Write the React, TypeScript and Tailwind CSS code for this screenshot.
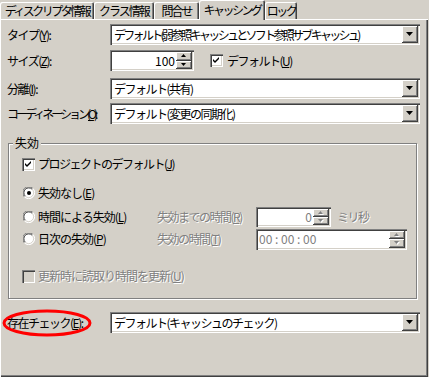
import React from "react";

const sunken =
  "shadow-[inset_1px_1px_0_#808080,inset_2px_2px_0_#404040,inset_-1px_-1px_0_#ffffff,inset_-2px_-2px_0_#d4d0c8]";
const raised =
  "shadow-[inset_-1px_-1px_0_#404040,inset_1px_1px_0_#ffffff,inset_-2px_-2px_0_#808080,inset_2px_2px_0_#d4d0c8]";

function Arrow({ disabled = false, small = false, up = false }: { disabled?: boolean; small?: boolean; up?: boolean }) {
  const w = small ? 5 : 7;
  const h = small ? 3 : 4;
  const pts = up ? `0,${h} ${w},${h} ${w / 2},0` : `0,0 ${w},0 ${w / 2},${h}`;
  return (
    <svg width={w + 1} height={h + 1} viewBox={`0 0 ${w + 1} ${h + 1}`}>
      {disabled && <polygon points={pts} fill="#ffffff" transform="translate(1,1)" />}
      <polygon points={pts} fill={disabled ? "#808080" : "#000000"} />
    </svg>
  );
}

function Combo({ text, tracking = "tracking-[-1.5px]" }: { text: string; tracking?: string }) {
  return (
    <div className={`flex h-[21px] w-[310px] bg-white p-[2px] ${sunken}`}>
      <div className={`flex flex-1 items-center pl-[2px] whitespace-nowrap overflow-hidden ${tracking}`}>{text}</div>
      <div className={`flex w-[16px] items-center justify-center bg-[#d4d0c8] ${raised}`}>
        <Arrow />
      </div>
    </div>
  );
}

function SpinButtons({ disabled = false }: { disabled?: boolean }) {
  return (
    <div className="flex w-[16px] flex-col">
      <div className={`flex flex-1 items-center justify-center bg-[#d4d0c8] ${raised}`}>
        <Arrow small up disabled={disabled} />
      </div>
      <div className={`flex flex-1 items-center justify-center bg-[#d4d0c8] ${raised}`}>
        <Arrow small disabled={disabled} />
      </div>
    </div>
  );
}

function Checkbox({ checked = false, disabled = false }: { checked?: boolean; disabled?: boolean }) {
  return (
    <div className={`relative h-[13px] w-[13px] shrink-0 ${disabled ? "bg-[#d4d0c8]" : "bg-white"} ${sunken}`}>
      {checked && (
        <svg className="absolute left-0 top-0" width="13" height="13" viewBox="0 0 13 13">
          <path d="M3 5 L5 7 L9 3 L9 5 L5 9 L3 7 Z" fill="#000" />
        </svg>
      )}
    </div>
  );
}

function Radio({ checked = false }: { checked?: boolean }) {
  return (
    <svg width="12" height="12" viewBox="0 0 12 12" className="shrink-0">
      <circle cx="6" cy="6" r="5.5" fill="#ffffff" />
      <path d="M1.4 9.9 A5.5 5.5 0 0 1 9.9 1.4" stroke="#808080" strokeWidth="1" fill="none" />
      <path d="M2.3 9.2 A4.5 4.5 0 0 1 9.2 2.3" stroke="#404040" strokeWidth="1" fill="none" />
      <path d="M9.9 1.4 A5.5 5.5 0 0 1 1.4 9.9" stroke="#ffffff" strokeWidth="1" fill="none" />
      <path d="M9.2 2.3 A4.5 4.5 0 0 1 2.3 9.2" stroke="#d4d0c8" strokeWidth="1" fill="none" />
      {checked && <circle cx="6" cy="6" r="2" fill="#000" />}
    </svg>
  );
}

function U({ c }: { c: string }) {
  return <span className="underline underline-offset-[1px]">{c}</span>;
}

const disabledText = "text-[#808080] [text-shadow:1px_1px_0_#ffffff]";

function Tab({ w, label, active = false, tr = "tracking-[-2px]" }: { w: string; label: string; active?: boolean; tr?: string }) {
  return (
    <div
      className={`flex items-center justify-center whitespace-nowrap rounded-t-[2px] bg-[#d4d0c8] ${w} ${tr} ${
        active
          ? "relative z-10 -mb-px h-[20px] shadow-[inset_1px_1px_0_#ffffff,inset_-1px_0_0_#404040,inset_-2px_0_0_#808080]"
          : "h-[17px] shadow-[inset_1px_1px_0_#ffffff,inset_-1px_0_0_#404040,inset_-2px_0_0_#808080]"
      }`}
    >
      {label}
    </div>
  );
}

export default function App() {
  return (
    <div className="relative h-[377px] w-[429px] overflow-hidden bg-[#d4d0c8] font-['Noto_Sans_CJK_JP',sans-serif] text-[12px] leading-[14px] text-black">
      {/* tabs */}
      <div className="flex h-[19px] items-end">
        <Tab w="w-[94px]" label="ディスクリプタ情報" tr="tracking-[-2.5px]" />
        <Tab w="w-[60px]" label="クラス情報" />
        <Tab w="w-[45px]" label="問合せ" />
        <Tab w="w-[66px]" label="キャッシング" active tr="tracking-[-2.5px]" />
        <Tab w="w-[32px]" label="ロック" tr="tracking-[-2.5px]" />
      </div>

      {/* panel */}
      <div className="h-[358px] w-[428px] pl-[7px] pt-[5px] shadow-[inset_1px_1px_0_#ffffff,inset_-1px_-1px_0_#404040,inset_-2px_-2px_0_#808080]">
        <div className="flex h-[21px] items-center">
          <div className="w-[103px] tracking-[-1.5px]">
            タイプ(<U c="Y" />):
          </div>
          <Combo text="デフォルト(弱参照キャッシュとソフト参照サブキャッシュ)" tracking="tracking-[-2.7px]" />
        </div>

        <div className="mt-[5px] flex h-[21px] items-center">
          <div className="w-[103px] tracking-[-1.5px]">
            サイズ(<U c="Z" />):
          </div>
          <div className={`flex h-[21px] w-[84px] bg-white p-[2px] ${sunken}`}>
            <div className="flex flex-1 items-center justify-end pr-[1px]">100</div>
            <SpinButtons />
          </div>
          <div className="ml-[16px] flex items-center gap-[4px]">
            <Checkbox checked />
            <span className="tracking-[-1.5px]">
              デフォルト(<U c="U" />)
            </span>
          </div>
        </div>

        <div className="mt-[7px] flex h-[21px] items-center">
          <div className="w-[103px] tracking-[-1.5px]">
            分離(<U c="I" />):
          </div>
          <Combo text="デフォルト(共有)" />
        </div>

        <div className="mt-[4px] flex h-[21px] items-center">
          <div className="w-[103px] whitespace-nowrap tracking-[-3px]">
            コーディネーション(<U c="O" />):
          </div>
          <Combo text="デフォルト(変更の同期化)" />
        </div>

        <fieldset className="ml-[1px] mt-[12px] w-[409px] border border-[#808080] p-0 shadow-[inset_1px_1px_0_#ffffff,1px_1px_0_#ffffff]">
          <legend className="ml-[4px] bg-[#d4d0c8] px-[2px] leading-[14px]">失効</legend>
          <div className="flex flex-col pb-[14px] pl-[13px]">
            <div className="mt-[6px] flex h-[16px] items-center gap-[3px]">
              <Checkbox checked />
              <span className="tracking-[-1.5px]">
                プロジェクトのデフォルト(<U c="J" />)
              </span>
            </div>
            <div className="mt-[13px] flex h-[16px] items-center gap-[3px] pl-[1px]">
              <Radio checked />
              <span className="tracking-[-1px]">
                失効なし(<U c="E" />)
              </span>
            </div>
            <div className="mt-[6px] flex h-[20px] items-center">
              <div className="flex w-[135px] items-center gap-[3px] pl-[1px]">
                <Radio />
                <span className="tracking-[-1px]">
                  時間による失効(<U c="L" />)
                </span>
              </div>
              <div className={`w-[99px] tracking-[-1.5px] ${disabledText}`}>
                失効までの時間(<U c="R" />)
              </div>
              <div className={`flex h-[20px] w-[75px] bg-white p-[2px] ${sunken}`}>
                <div className="flex flex-1 items-center justify-end pr-[1px] text-[#808080]">0</div>
                <SpinButtons disabled />
              </div>
              <span className={`ml-[6px] tracking-[-1.5px] ${disabledText}`}>ミリ秒</span>
            </div>
            <div className="mt-[2px] flex h-[20px] items-center">
              <div className="flex w-[135px] items-center gap-[3px] pl-[1px]">
                <Radio />
                <span className="tracking-[-1px]">
                  日次の失効(<U c="P" />)
                </span>
              </div>
              <div className={`w-[99px] tracking-[-1.5px] ${disabledText}`}>
                失効の時間(<U c="T" />)
              </div>
              <div className={`flex h-[21px] w-[151px] bg-white p-[2px] ${sunken}`}>
                <div className="flex flex-1 items-center pl-[1px] text-[#808080]">00 : 00 : 00</div>
                <SpinButtons disabled />
              </div>
            </div>
            <div className="mt-[19px] flex h-[16px] items-center gap-[3px]">
              <Checkbox disabled />
              <span className={`tracking-[-1px] ${disabledText}`}>
                更新時に読取り時間を更新(<U c="U" />)
              </span>
            </div>
          </div>
        </fieldset>

        <div className="mt-[13px] flex h-[21px] items-center">
          <div className="w-[103px] tracking-[-1.5px]">
            存在チェック(<U c="E" />):
          </div>
          <Combo text="デフォルト(キャッシュのチェック)" />
        </div>
      </div>

      {/* red annotation ellipse */}
      <svg className="absolute left-[2px] top-[309px]" width="90" height="28" viewBox="0 0 90 28">
        <ellipse cx="45" cy="14" rx="43" ry="12" fill="none" stroke="#ff0000" strokeWidth="3" />
      </svg>
    </div>
  );
}
